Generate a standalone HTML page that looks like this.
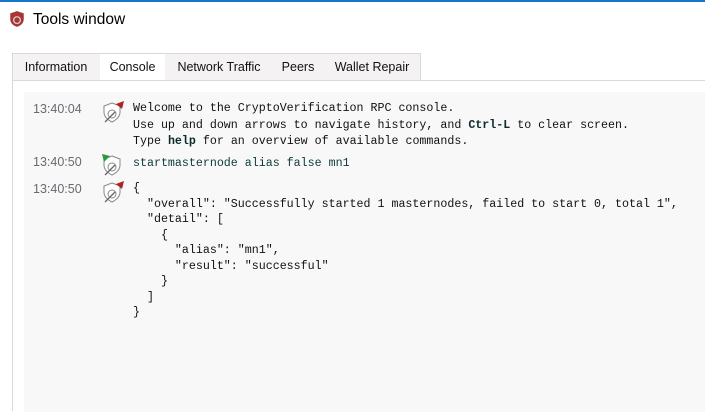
<!DOCTYPE html>
<html><head><style>
body{margin:0;width:705px;height:405px;background:#fff;position:relative;overflow:hidden;font-family:"Liberation Sans",sans-serif}
.top{position:absolute;left:0;top:0;width:705px;height:2px;background:#1a74c9}
.title{position:absolute;left:33px;top:11px;font-size:15.5px;color:#000}
.tabs{position:absolute;left:12px;top:53px;width:409px;height:27px;background:#f4f2f3;border:1px solid #d9d9d9;border-bottom:none;box-sizing:border-box}
.tab{position:absolute;top:0;height:26px;line-height:27px;font-size:12.5px;color:#111}
.pane{position:absolute;left:12px;top:80px;width:700px;height:330px;border-left:1px solid #d9d9d9;border-top:1px solid #d9d9d9}
.con{position:absolute;left:24px;top:92px;width:690px;height:320px;background:#f8f8f8}
.ts{position:absolute;left:33px;font-size:12.5px;color:#6e6670}
.m{position:absolute;left:133px;font-family:"Liberation Mono",monospace;font-size:11.65px;line-height:16.5px;color:#111;white-space:pre}
.ic{position:absolute;left:101px}
b{font-weight:bold;color:#0c2a2a}
</style></head><body>
<div class="top"></div>
<svg style="position:absolute;left:8px;top:10px" width="18" height="18" viewBox="0 0 16 16"><path d="M8 1 L14 3 V8 C14 12 11 14 8 15 C5 14 2 12 2 8 V3 Z" fill="#a33"/><circle cx="8" cy="9" r="3" fill="none" stroke="#ccc" stroke-width="1.2"/></svg>
<div class="title">Tools window</div>
<div class="tabs">
<div class="tab" style="left:0;width:86px;text-align:center">Information</div>
<div class="tab" style="left:87px;width:65px;background:#fff;text-align:center">Console</div>
<div class="tab" style="left:152px;width:108px;text-align:center">Network Traffic</div>
<div class="tab" style="left:260px;width:50px;text-align:center">Peers</div>
<div class="tab" style="left:310px;width:98px;text-align:center">Wallet Repair</div>
</div>
<div class="pane"></div>
<div class="con"></div>
<div class="ts" style="top:102px">13:40:04</div>
<div class="ts" style="top:155px">13:40:50</div>
<div class="ts" style="top:182px">13:40:50</div>
<svg class="ic" style="top:100px" width="24" height="24" viewBox="0 0 24 24"><path d="M11 3 L19 6 V12 C19 17 15 20 11 22 C7 20 3 17 3 12 V6 Z" fill="#fff" stroke="#888" stroke-width="1"/><circle cx="11" cy="14" r="4" fill="none" stroke="#888"/><path d="M4 22 L14 12" stroke="#667" stroke-width="1.3"/><path d="M15 4 L23 1 L21 9 Z" fill="#a22"/></svg>
<svg class="ic" style="top:153px" width="24" height="24" viewBox="0 0 24 24"><path d="M11 3 L19 6 V12 C19 17 15 20 11 22 C7 20 3 17 3 12 V6 Z" fill="#fff" stroke="#888" stroke-width="1"/><circle cx="11" cy="14" r="4" fill="none" stroke="#888"/><path d="M4 22 L14 12" stroke="#667" stroke-width="1.3"/><path d="M1 1 L9 3 L3 9 Z" fill="#2a9a3a"/></svg>
<svg class="ic" style="top:180px" width="24" height="24" viewBox="0 0 24 24"><path d="M11 3 L19 6 V12 C19 17 15 20 11 22 C7 20 3 17 3 12 V6 Z" fill="#fff" stroke="#888" stroke-width="1"/><circle cx="11" cy="14" r="4" fill="none" stroke="#888"/><path d="M4 22 L14 12" stroke="#667" stroke-width="1.3"/><path d="M15 4 L23 1 L21 9 Z" fill="#a22"/></svg>
<div class="m" style="top:101px">Welcome to the CryptoVerification RPC console.
Use up and down arrows to navigate history, and <b>Ctrl-L</b> to clear screen.
Type <b>help</b> for an overview of available commands.</div>
<div class="m" style="top:156px;color:#0c3a3a">startmasternode alias false mn1</div>
<div class="m" style="top:181px;line-height:15.5px">{
  "overall": "Successfully started 1 masternodes, failed to start 0, total 1",
  "detail": [
    {
      "alias": "mn1",
      "result": "successful"
    }
  ]
}</div>
</body></html>
